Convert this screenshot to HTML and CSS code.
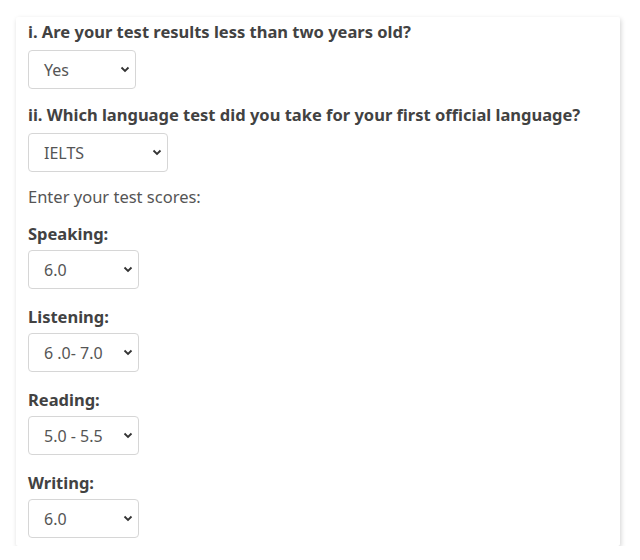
FILE: index.html
```html
<!DOCTYPE html>
<html>
<head>
<meta charset="utf-8">
<link rel="stylesheet" href="styles.css">
</head>
<body>
<div class="card">
  <div class="q">
    <h3 class="qtitle">i. Are your test results less than two years old?</h3>
    <div class="select w108"><span>Yes</span><svg class="chev" width="10" height="7" viewBox="0 0 10 7"><path d="M1.5 1.5 L5 5 L8.5 1.5" fill="none" stroke="#333" stroke-width="1.8"/></svg></div>
  </div>
  <div class="q">
    <h3 class="qtitle">ii. Which language test did you take for your first official language?</h3>
    <div class="select w140"><span>IELTS</span><svg class="chev" width="10" height="7" viewBox="0 0 10 7"><path d="M1.5 1.5 L5 5 L8.5 1.5" fill="none" stroke="#333" stroke-width="1.8"/></svg></div>
  </div>
  <p class="hint">Enter your test scores:</p>
  <div class="score">
    <h4 class="label">Speaking:</h4>
    <div class="select w111"><span>6.0</span><svg class="chev" width="10" height="7" viewBox="0 0 10 7"><path d="M1.5 1.5 L5 5 L8.5 1.5" fill="none" stroke="#333" stroke-width="1.8"/></svg></div>
  </div>
  <div class="score">
    <h4 class="label">Listening:</h4>
    <div class="select w111"><span>6 .0- 7.0</span><svg class="chev" width="10" height="7" viewBox="0 0 10 7"><path d="M1.5 1.5 L5 5 L8.5 1.5" fill="none" stroke="#333" stroke-width="1.8"/></svg></div>
  </div>
  <div class="score">
    <h4 class="label">Reading:</h4>
    <div class="select w111"><span>5.0 - 5.5</span><svg class="chev" width="10" height="7" viewBox="0 0 10 7"><path d="M1.5 1.5 L5 5 L8.5 1.5" fill="none" stroke="#333" stroke-width="1.8"/></svg></div>
  </div>
  <div class="score">
    <h4 class="label">Writing:</h4>
    <div class="select w111"><span>6.0</span><svg class="chev" width="10" height="7" viewBox="0 0 10 7"><path d="M1.5 1.5 L5 5 L8.5 1.5" fill="none" stroke="#333" stroke-width="1.8"/></svg></div>
  </div>
</div>
</body>
</html>
```
FILE: styles.css
```css
html, body {
  margin: 0;
  padding: 0;
  background: #ffffff;
}
body {
  font-family: "Noto Sans", "Open Sans", sans-serif;
  color: #444;
  padding: 17px 20px 0 16px;
}
.card {
  width: 604px;
  height: 529px;
  box-sizing: border-box;
  background: #fff;
  border-radius: 2px;
  box-shadow: 1px 2px 5px rgba(0,0,0,0.18);
  padding: 4px 12px 0 12px;
}
.qtitle {
  margin: 0;
  font-size: 16.5px;
  line-height: 22px;
  font-weight: 700;
  color: #424242;
}
.q {
  display: flex;
  flex-direction: column;
  align-items: flex-start;
  gap: 7px;
  margin-bottom: 15px;
}
.select {
  height: 39px;
  box-sizing: border-box;
  border: 1px solid #d6d6d6;
  border-radius: 4px;
  display: flex;
  align-items: center;
  justify-content: space-between;
  padding: 0 5px 0 15px;
  font-size: 16px;
  color: #555;
  background: #fff;
}
.w108 { width: 108px; }
.w140 { width: 140px; }
.w111 { width: 111px; }
.chev { flex: none; }
.hint {
  margin: -1px 0 16px 0;
  font-size: 16.5px;
  line-height: 22px;
  color: #555;
}
.score {
  display: flex;
  flex-direction: column;
  align-items: flex-start;
  gap: 6px;
  margin-bottom: 18px;
}
.label {
  margin: 0;
  font-size: 16.5px;
  line-height: 20px;
  font-weight: 700;
  color: #424242;
}
```
